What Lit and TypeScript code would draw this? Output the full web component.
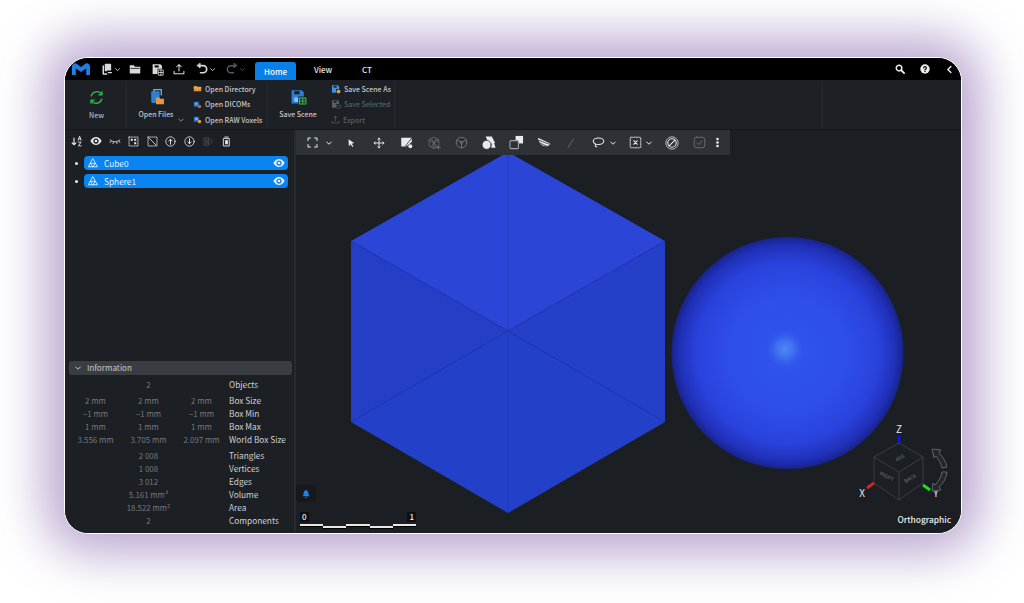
import { LitElement, html, css, svg } from "lit";
import { customElement } from "lit/decorators.js";

const I = (body: unknown, size = 12, vb = "0 0 16 16") =>
  html`<svg width=${size} height=${size} viewBox=${vb} fill="none" stroke="currentColor" stroke-width="1.4" stroke-linecap="round" stroke-linejoin="round">${body}</svg>`;

const eye = svg`<path d="M.5 8c2-3.600 4.600-5.300 7.500-5.300s5.500 1.700 7.500 5.300c-2 3.600-4.600 5.300-7.500 5.300S2.500 11.600.5 8z" fill="currentColor" stroke="none"/><circle cx="8" cy="8" r="3.500" fill="var(--pupil, #1c1f23)" stroke="none"/><circle cx="8" cy="8" r="1.800" fill="currentColor" stroke="none"/>`;
const triMesh = svg`<path d="M8 1.500 15 14H1z"/><path d="M4.500 8.500h7L8 14z"/>`;

const icons: Record<string, unknown> = {
  newFile: svg`<rect x="5" y="1" width="8.500" height="10" rx="1" fill="currentColor" stroke="none"/><path d="M3 4v10.500h6" stroke-width="2"/><rect x="8" y="10" width="7" height="5.500" fill="#000" stroke="none"/><path d="M9.500 12.800h4.500" stroke-width="1.500"/>`,
  folder: svg`<path d="M1 3h5.500L8 5h7v9H1z" fill="currentColor" stroke="none"/><path d="M2.500 7.200h11" stroke="#000" stroke-width="1"/>`,
  saveGrid: svg`<path d="M2 1.500h9.500l2 2V7H8v6.500H2z" fill="currentColor" stroke="none"/><rect x="4.500" y="3" width="5" height="2.500" fill="#000" stroke="none"/><path d="M9.500 8.500h5.500v6.500h-5.500zM12.200 8.500V15M9.500 11.700h5.500" stroke-width="1"/>`,
  upload: svg`<path d="M8 10.500V2.500M5 5l3-3 3 3M1.500 11v3.300h13V11"/>`,
  undo: svg`<path d="M5 3.500h4.500a4.300 4.300 0 0 1 0 9.500H6" stroke-width="2.200"/><path d="M5.500.500v6L1.500 3.500z" fill="currentColor" stroke-width="1"/>`,
  redo: svg`<path d="M11 3.500H6.500a4.300 4.300 0 0 0 0 9.500H10" stroke-width="2"/><path d="M10.500.500v6l4-3z" fill="currentColor" stroke-width="1"/>`,
  chevron: svg`<path d="M3.500 6 8 10.500 12.500 6" stroke-width="2"/>`,
  search: svg`<circle cx="6.500" cy="6.500" r="4.500" stroke-width="2.400"/><path d="m10 10 4.500 4.500" stroke-width="3"/>`,
  help: svg`<circle cx="8" cy="8" r="7.500" fill="currentColor" stroke="none"/><path d="M5.800 6.200A2.200 2.200 0 1 1 8 8.500v1" stroke="#000" stroke-width="1.800"/><circle cx="8" cy="12" r="1.100" fill="#000" stroke="none"/>`,
  back: svg`<path d="M10.500 2.500 5 8l5.500 5.500" stroke-width="2.400"/>`,
  sortAz: svg`<path d="M4 4v9M1.500 10.500 4 13l2.500-2.500" stroke-width="1.500"/><path d="M9.500 7 11.500 1.500 13.500 7M10.200 5.200h2.600M9.800 9.500h3.700L9.800 14.500h3.700" stroke-width="1.200"/>`,
  eye,
  lash: svg`<path d="M1.500 6.500c4 3.500 9 3.500 13 0M3 8l-1.500 2M6 9.300 5.300 11.500M10 9.300l.7 2.200M13 8l1.500 2" stroke-width="1.100"/>`,
  gridDots: svg`<rect x="1.500" y="1.500" width="13" height="13" stroke-dasharray="1.600 1.400" stroke-width="1.100"/><rect x="4" y="4" width="3" height="3" fill="currentColor" stroke="none"/><rect x="9" y="4" width="3" height="3" fill="currentColor" stroke="none"/><rect x="9" y="9" width="3" height="3" fill="currentColor" stroke="none"/>`,
  slashBox: svg`<rect x="1.500" y="1.500" width="13" height="13" stroke-dasharray="1.600 1.400" stroke-width="1.100"/><path d="m3 3 10 10" stroke-width="1.200"/>`,
  circleUp: svg`<circle cx="8" cy="8" r="6.800" stroke-width="1.200"/><path d="M8 12V4.800M5.500 7.300 8 4.800l2.500 2.500" stroke-width="1.400"/>`,
  circleDown: svg`<circle cx="8" cy="8" r="6.800" stroke-width="1.200"/><path d="M8 4v7.200M5.500 8.700 8 11.200l2.500-2.500" stroke-width="1.400"/>`,
  speaker: svg`<path d="M2 2.500h6v11H2z" stroke-width="1" stroke="currentColor"/><path d="M3.500 4h3v8h-3z" fill="currentColor" stroke="none" opacity=".6"/><path d="M10 4.500c2 .8 3 2 3 3.500s-1 2.700-3 3.500" stroke-width="1"/>`,
  trash: svg`<path d="M5.500 1.500h5M4 3.500h8v11H4z" stroke-width="1.300"/><rect x="6" y="6" width="4" height="6" fill="currentColor" stroke="none"/>`,
  full: svg`<path d="M1.500 5V1.500H5M11 1.500h3.500V5M14.500 11v3.500H11M5 14.500H1.500V11" stroke-width="1.500"/>`,
  pointer: svg`<path d="M4 2 13 8l-3.800 1 2.600 4.200-1.800 1-2.500-4.200L4.500 13z" fill="currentColor" stroke="none"/>`,
  move: svg`<path d="M8 1.500v13M1.500 8h13M6.500 3 8 1.500 9.500 3M6.500 13 8 14.500 9.500 13M3 6.500 1.500 8 3 9.500M13 6.500 14.500 8 13 9.500" stroke-width="1.300"/>`,
  paint: svg`<path d="M1.500 2h13v5.500L7.500 13h-6z" fill="currentColor" stroke="none"/><path d="M14.500 2.500 6.500 12.500" stroke="#2e3136" stroke-width="1"/><circle cx="12.700" cy="12.700" r="2.400" fill="currentColor" stroke="none"/>`,
  mesh: svg`<path d="M8 1.500 13.500 4.500v6.500L8 14.500 2.500 11V4.500zM2.500 4.500 8 8l5.500-3.500M8 8v6.500M5 3l5.500 9M11 3 5.500 12" stroke-width=".9"/><path d="M13 11v4M11 13h4" stroke-width="1"/>`,
  steer: svg`<circle cx="8" cy="8" r="6.500" stroke-width="1.200"/><path d="M8 8v6.500M8 8 2.400 4.800M8 8l5.600-3.200" stroke-width="1.200"/><circle cx="8" cy="8" r="1.500" fill="currentColor" stroke="none"/>`,
  shapes: svg`<path d="M5 1.500h6.500l3.500 7H8z" fill="currentColor" stroke="none"/><path d="M11 8.500h3l1.500 5H11z" fill="currentColor" stroke="none"/><circle cx="6" cy="10.500" r="4.800" fill="currentColor" stroke="#2e3136" stroke-width=".8"/>`,
  copy: svg`<rect x="7" y="1" width="8" height="8" fill="currentColor" stroke="none"/><rect x="1" y="6" width="9" height="8.500" rx="1" stroke="#9aa0a6" stroke-width="1.200" fill="#2e3136"/>`,
  feather: svg`<path d="M1 2 14 8c1 .6 1 1.400.2 2.200-2 1.700-5.200 2-8 .6C3.800 9.300 2 6 1 2z" fill="currentColor" stroke="none"/><path d="M2.500 5 13.500 9.200M4 8.400l7 3.200" stroke="#2e3136" stroke-width=".9"/>`,
  pen: svg`<path d="M11.500 2.500 4 14" stroke-width="1.100"/>`,
  lasso: svg`<ellipse cx="8" cy="6.500" rx="6.500" ry="4" stroke-width="1.300"/><path d="M4.500 10c-1 1.500-.3 3.300 1.500 3.300" stroke-width="1.300"/>`,
  selectX: svg`<rect x="1.500" y="1.500" width="13" height="13" rx="1" stroke-dasharray="1.800 1.400" stroke-width="1.100"/><path d="m5.800 5.800 4.400 4.400M10.200 5.800l-4.400 4.400" stroke-width="1.300"/>`,
  ban: svg`<circle cx="8" cy="8" r="7" stroke-width=".9" stroke-dasharray="1.200 .8"/><circle cx="8" cy="8" r="4.800" stroke-width="1.300"/><path d="m4.800 11.300 6.500-6.500" stroke-width="1.300"/>`,
  check: svg`<rect x="1.500" y="1.500" width="13" height="13" rx="3" stroke-width="1.100"/><path d="M5 8.300 7.200 10.500 11 6" stroke-width="1.100"/>`,
  dots: svg`<circle cx="8" cy="3" r="1.900" fill="currentColor" stroke="none"/><circle cx="8" cy="8" r="1.900" fill="currentColor" stroke="none"/><circle cx="8" cy="13" r="1.900" fill="currentColor" stroke="none"/>`,
  bell: svg`<path d="M8 1.200c.7 0 1 .5 1 1 2 .6 2.800 2.300 2.800 4.300 0 2.300.7 3.700 1.700 5H2.500c1-1.300 1.700-2.700 1.700-5 0-2 .8-3.700 2.800-4.300 0-.5.300-1 1-1zM6.500 12.800h3a1.500 1.500 0 0 1-3 0z" fill="currentColor" stroke="none"/>`,
  meshTri: triMesh,
  refresh: svg`<path d="M3 6.500A5.500 5.500 0 0 1 12.500 4.500" stroke="#2ebd4e" stroke-width="1.300"/><path d="M13 9.500A5.500 5.500 0 0 1 3.500 11.500" stroke="#2ebd4e" stroke-width="1.300"/><path d="M13.200 2.500v3h-3M2.800 13.500v-3h3" stroke="#2ebd4e" stroke-width="1.200"/>`,
  openFiles: svg`<rect x="3" y="3" width="8" height="11" rx="1" fill="#2a7fd8" stroke="none"/><path d="M5.500 3V1.500h7v5" stroke="#6fb4ee" stroke-width="1.200"/><path d="M7.500 9h3l1 1.200h3.500v5h-7.500z" fill="#e39a3c" stroke="none"/>`,
  saveScene: svg`<path d="M1.500 2h9.500l2 2v4H8v6.500H1.500z" fill="#2a7fd8" stroke="none"/><rect x="4" y="3" width="5" height="3" fill="#1d2024" stroke="none"/><rect x="4" y="9" width="3.500" height="4" fill="#8ec5f2" stroke="none"/><path d="M9 9.500h6v5.500H9zM12 9.500V15M9 12.200h6" stroke="#3fb34f" stroke-width="1"/>`,
  miniFolder: svg`<path d="M1.500 3.500h5l1.500 1.500h6.500v8h-13z" fill="#e0963a" stroke="none"/><path d="M1.500 7h13" stroke="#f3c27d" stroke-width="1.200"/>`,
  dicom: svg`<rect x="1.500" y="3" width="9" height="9" rx="1" fill="#2f6fc4" stroke="none"/><circle cx="5.500" cy="7" r="2" fill="#8fbdec" stroke="none"/><circle cx="11.500" cy="11.500" r="3.200" fill="#d9503f" stroke="none"/>`,
  raw: svg`<rect x="1.500" y="3" width="9" height="9" rx="1" fill="#2f6fc4" stroke="none"/><rect x="4" y="5" width="4" height="4" fill="#8fbdec" stroke="none"/><circle cx="11.500" cy="11.500" r="3.200" fill="#e0963a" stroke="none"/>`,
  saveAs: svg`<path d="M1.500 2h9.500l2 2v4H8v6H1.500z" fill="#3d8fe0" stroke="none"/><rect x="4" y="3" width="5" height="2.800" fill="#1d2024" stroke="none"/><circle cx="12" cy="12" r="3.200" fill="#e0963a" stroke="none"/>`,
  saveOff: svg`<path d="M1.500 2h9.500l2 2v4H8v6H1.500z" fill="#5a5e63" stroke="none"/><rect x="4" y="3" width="5" height="2.800" fill="#1d2024" stroke="none"/><path d="M9 10h6v4.500H9z" stroke="#5a5e63" stroke-width="1"/>`,
  exportOff: svg`<path d="M8 10V2.500M5 5l3-3 3 3M2 11v3h12v-3" stroke="#5a5e63"/>`,
};

const ic = (name: string, size = 12) => I(icons[name], size);

const infoRows: { v: string[]; label: string; cls?: string }[] = [
  { v: ["", "2", ""], label: "Objects" },
  { v: ["2 mm", "2 mm", "2 mm"], label: "Box Size", cls: "first" },
  { v: ["−1 mm", "−1 mm", "−1 mm"], label: "Box Min" },
  { v: ["1 mm", "1 mm", "1 mm"], label: "Box Max" },
  { v: ["3.556 mm", "3.705 mm", "2.097 mm"], label: "World Box Size" },
  { v: ["", "2 008", ""], label: "Triangles", cls: "first" },
  { v: ["", "1 008", ""], label: "Vertices" },
  { v: ["", "3 012", ""], label: "Edges" },
  { v: ["", "5.161 mm³", ""], label: "Volume" },
  { v: ["", "18.522 mm²", ""], label: "Area" },
  { v: ["", "2", ""], label: "Components" },
];

@customElement("app-root")
export class AppRoot extends LitElement {
  static styles = css`
    :host {
      display: block;
      width: 1024px;
      height: 603px;
      overflow: hidden;
      background: #fff;
      font-family: "Noto Sans CJK SC", "Noto Sans", sans-serif;
      box-sizing: border-box;
      padding: 57px 62px 69px 64px;
    }
    svg { display: block; flex: none; }
    .window {
      height: 100%;
      border: 1.500px solid #fff;
      border-radius: 24px;
      overflow: hidden;
      background: #1c1f23;
      display: flex;
      flex-direction: column;
      box-shadow: 0 0 52px 18px #b6a2cd;
      box-sizing: border-box;
    }
    .titlebar {
      height: 22px;
      flex: none;
      background: #000;
      display: flex;
      align-items: center;
      color: #d8dadc;
    }
    .logo { margin-left: 7px; margin-right: 7px; }
    .tb { width: 22px; display: flex; justify-content: center; align-items: center; }
    .tb.dim { color: #55585c; }
    .tb.pair { width: 27px; gap: 1px; }
    .tb.pair.undo { margin-left: 1px; width: 30px; }
    .tb.pair.redo { width: 29px; }
    .tab {
      height: 22px;
      font-size: 8px;
      font-weight: 500;
      color: #e6e8ea;
      display: flex;
      align-items: center;
      justify-content: center;
      width: 44px;
    }
    .tab.active {
      margin-left: 5px;
      width: 41px;
      height: 18px;
      align-self: flex-end;
      background: #0a7fe8;
      border-radius: 3px 3px 0 0;
      color: #fff;
    }
    .tab.view { margin-left: 5px; }
    .spacer { flex: 1; }
    .right-ic { display: flex; align-items: center; gap: 15px; margin-right: 7px; color: #eee; }
    .ribbon {
      height: 50px;
      flex: none;
      display: flex;
      background: #1d2024;
      border-bottom: 1px solid #15171a;
      box-sizing: border-box;
      font-size: 7px;
      font-weight: 500;
      color: #c4c7ca;
    }
    .rg {
      border-right: 1px solid #26292d;
      display: flex;
      height: 47px;
      margin-top: 1px;
      box-sizing: border-box;
    }
    .rg.new { width: 62px; flex-direction: column; align-items: center; padding: 8px 0 0 2px; }
    .new-label { font-size: 7px; color: #b8bbbe; margin-top: 4px; line-height: 10px; }
    .rg.open { width: 141px; padding-left: 4px; }
    .rg.save { width: 127px; padding-left: 5px; }
    .big { display: flex; flex-direction: column; align-items: center; width: 50px; line-height: 11px; padding-top: 7px; gap: 4px; flex: none; }
    .big span { white-space: nowrap; }
    .chev-sm { align-self: flex-end; margin: 0 0 4px -4px; color: #85888c; flex: none; }
    .list { display: flex; flex-direction: column; flex: none; }
    .rg.open .list { margin-left: 8px; }
    .rg.save .list { margin-left: 8px; }
    .li { display: flex; align-items: center; gap: 3px; height: 15.500px; flex: none; white-space: nowrap; font-size: 7px; }
    .li.off { color: #5b5f63; }
    .rg.tail { width: 428px; }
    .body { flex: 1; display: flex; min-height: 0; }
    .panel {
      width: 229px;
      flex: none;
      border-right: 2px solid #26292d;
      box-sizing: content-box;
      display: flex;
      flex-direction: column;
      background: #1c1f23;
      color: #d2d4d7;
    }
    .ptools { display: flex; align-items: center; height: 22px; padding: 0 0 0 3px; color: #e6e8ea; }
    .ptools div { width: 18.700px; display: flex; justify-content: center; }
    .ptools .dim { color: #55595e; }
    .tree { display: flex; flex-direction: column; gap: 4px; padding-top: 4px; }
    .row { display: flex; align-items: center; padding-left: 10px; }
    .bullet { width: 3px; height: 3px; border-radius: 50%; background: #e8eaec; margin-right: 6px; }
    .item {
      width: 204px;
      height: 14px;
      background: #0a84f0;
      border-radius: 4px;
      display: flex;
      align-items: center;
      color: #e8f3ff;
      font-size: 8.300px;
      padding: 0 3px 0 4px;
      box-sizing: border-box;
      gap: 6px;
      --pupil: #0a84f0;
    }
    .item span { flex: 1; }
    .info { margin-top: auto; padding: 0 2px 6.500px 4px; }
    .info-h {
      height: 14px;
      background: #3a3d42;
      border-radius: 3px;
      display: flex;
      align-items: center;
      gap: 5px;
      font-size: 8.100px;
      color: #c6c8cb;
      padding-left: 5px;
      margin-bottom: 3px;
      width: 223px;
      box-sizing: border-box;
    }
    .irow { display: grid; grid-template-columns: 53px 53px 53px auto; height: 13px; align-items: center; font-size: 7.900px; line-height: 13px; }
    .irow.first { margin-top: 3px; }
    .irow div { text-align: center; color: #75797d; white-space: nowrap; }
    .irow .lab { text-align: left; color: #cfd1d4; margin-left: 1px; font-size: 8.300px; }
    .vp { flex: 1; position: relative; background: #1b1e22; overflow: hidden; }
    .scene { position: absolute; inset: 0; width: 100%; height: 100%; }
    .vtools {
      position: absolute;
      left: 0;
      top: 0;
      height: 25px;
      width: 434px;
      background: #2e3136;
      display: flex;
      align-items: center;
      padding-left: 3px;
      box-sizing: border-box;
      color: #e8eaec;
    }
    .vt { width: 27.500px; display: flex; justify-content: center; flex: none; }
    .vt.dim { color: #70747a; }
    .vt.narrow { width: 9px; }
    .vchev { width: 12px; margin-left: -6px; margin-right: 3px; display: flex; justify-content: center; flex: none; }
    .vchev.wide { margin-left: -4px; }
    .bell {
      position: absolute;
      left: 0;
      bottom: 31px;
      width: 20px;
      height: 17px;
      background: #16181b;
      border-radius: 3px;
      display: flex;
      align-items: center;
      justify-content: center;
      color: #1684f0;
    }
    .scale { position: absolute; left: 4px; bottom: 3px; width: 116px; }
    .scale-l { display: flex; justify-content: space-between; font-size: 8px; font-weight: 500; color: #eee; line-height: 10px; margin-bottom: 2px; }
    .scale-l span { background: #0e0f11; padding: 0 2px; }
    .bars { display: flex; align-items: flex-start; height: 6px; }
    .bars i { flex: 1; height: 2px; background: #e8e8e4; box-shadow: 0 1px 0 #000; display: block; }
    .bars i:nth-child(even) { margin-top: 2px; }
    .ortho { position: absolute; right: 10px; bottom: 8px; font-size: 8.400px; font-weight: 500; color: #eceeef; line-height: 12px; }
  `;

  render() {
    return html`<div class="window">
      <div class="titlebar">
        <svg class="logo" width="18" height="12" viewBox="0 0 18 12"><path d="M0 12V3.500C0 1 2.800-.6 5 1L9 4l4-3c2.200-1.600 5 0 5 2.500V12h-3.800V5.500L9 9 3.800 5.500V12z" fill="#1f7fe0"/></svg>
        <div class="tb pair">${ic("newFile", 12)}${ic("chevron", 7)}</div>
        <div class="tb">${ic("folder", 12)}</div>
        <div class="tb">${ic("saveGrid", 13)}</div>
        <div class="tb">${ic("upload", 12)}</div>
        <div class="tb pair undo">${ic("undo", 12)}${ic("chevron", 7)}</div>
        <div class="tb pair redo dim">${ic("redo", 12)}${ic("chevron", 7)}</div>
        <div class="tab active">Home</div>
        <div class="tab view">View</div>
        <div class="tab">CT</div>
        <div class="spacer"></div>
        <div class="right-ic">${ic("search", 10)}${ic("help", 10)}${ic("back", 9)}</div>
      </div>
      <div class="ribbon">
        <div class="rg new">${ic("refresh", 17)}<span class="new-label">New</span></div>
        <div class="rg open">
          <div class="big">${ic("openFiles", 17)}<span>Open Files</span></div>
          <div class="chev-sm">${ic("chevron", 8)}</div>
          <div class="list">
            <div class="li">${ic("miniFolder", 9)}Open Directory</div>
            <div class="li">${ic("dicom", 9)}Open DICOMs</div>
            <div class="li">${ic("raw", 9)}Open RAW Voxels</div>
          </div>
        </div>
        <div class="rg save">
          <div class="big">${ic("saveScene", 17)}<span>Save Scene</span></div>
          <div class="list">
            <div class="li">${ic("saveAs", 10)}Save Scene As</div>
            <div class="li off">${ic("saveOff", 10)}Save Selected</div>
            <div class="li off">${ic("exportOff", 9)}Export</div>
          </div>
        </div>
        <div class="rg tail"></div>
      </div>
      <div class="body">
        <div class="panel">
          <div class="ptools">
            <div>${ic("sortAz", 12)}</div><div>${ic("eye", 12)}</div><div>${ic("lash", 12)}</div>
            <div>${ic("gridDots", 11)}</div><div>${ic("slashBox", 11)}</div><div>${ic("circleUp", 11)}</div>
            <div>${ic("circleDown", 11)}</div><div class="dim">${ic("speaker", 11)}</div><div>${ic("trash", 11)}</div>
          </div>
          <div class="tree">
            ${["Cube0", "Sphere1"].map(
              (n) => html`<div class="row"><span class="bullet"></span>
                <div class="item">${ic("meshTri", 10)}<span>${n}</span>${ic("eye", 12)}</div></div>`
            )}
          </div>
          <div class="info">
            <div class="info-h">${ic("chevron", 8)}Information</div>
            ${infoRows.map(
              (r) => html`<div class="irow ${r.cls ?? ""}">
                <div>${r.v[0]}</div><div>${r.v[1]}</div><div>${r.v[2]}</div><div class="lab">${r.label}</div>
              </div>`
            )}
          </div>
        </div>
        <div class="vp">
          <svg class="scene" viewBox="296 130 665 403" preserveAspectRatio="xMinYMin slice">
            <defs>
              <radialGradient id="sph" cx="787.500" cy="353" r="116" gradientUnits="userSpaceOnUse">
                <stop offset="0" stop-color="#3055ec"/>
                <stop offset=".5" stop-color="#2e4eea"/>
                <stop offset=".78" stop-color="#2a42dc"/>
                <stop offset=".93" stop-color="#2030b8"/>
                <stop offset="1" stop-color="#18238c"/>
              </radialGradient>
              <radialGradient id="hl" cx="785" cy="349" r="20" gradientUnits="userSpaceOnUse">
                <stop offset="0" stop-color="#5088f4"/>
                <stop offset=".45" stop-color="#4578f2" stop-opacity=".75"/>
                <stop offset="1" stop-color="#3055ec" stop-opacity="0"/>
              </radialGradient>
            </defs>
            <path d="M508 152 351 241 508 331z" fill="#2b45d6"/>
            <path d="M508 152 665 241 508 331z" fill="#2b45d6"/>
            <path d="M351 241 351 422 508 331z" fill="#243fc6"/>
            <path d="M351 422 508 513 508 331z" fill="#2340c8"/>
            <path d="M665 241 665 422 508 331z" fill="#243fc8"/>
            <path d="M665 422 508 513 508 331z" fill="#2340c8"/>
            <path d="M508 152V513M351 241 508 331 665 241M351 422 508 331 665 422" stroke="#1f33b4" stroke-width=".7" fill="none"/>
            <circle cx="787.500" cy="353" r="116" fill="url(#sph)"/>
            <circle cx="785" cy="349" r="20" fill="url(#hl)"/>
            <path d="M899 443 923 457V483L899 500 874 483V457zM874 457 899 472 923 457M899 472V500" fill="#1c1f23" stroke="#3a3d42"/>
            <g font-family="Noto Sans CJK SC, Noto Sans, sans-serif" font-size="5" font-weight="500" fill="#62666b" text-anchor="middle">
              <text transform="translate(886 478) rotate(25)">RIGHT</text>
              <text transform="translate(911 480) rotate(-30)">BACK</text>
              <text transform="translate(899 456) rotate(150)">TOP</text>
            </g>
            <path d="M899 443V436" stroke="#1414d8" stroke-width="3"/>
            <path d="M874 483 867 488" stroke="#d8222a" stroke-width="3"/>
            <path d="M923 485 930 490" stroke="#22d822" stroke-width="3"/>
            <g font-family="Noto Sans CJK SC, Noto Sans, sans-serif" font-size="10" fill="#e8eaec" text-anchor="middle">
              <text x="899" y="433">Z</text>
              <text x="862" y="497">X</text>
              <text x="936" y="497">Y</text>
            </g>
            <g fill="#24272b" stroke="#5f6367" stroke-width="1">
              <path d="M932 449 941 450 939 453C943 457 946 462 947 467L942 468C941 463 938 459 936 456L934 458z"/>
              <path d="M947 472C946 479 943 484 939 487L941 490 932 491 933 483 935 485C939 481 941 477 942 472z"/>
            </g>
          </svg>
          <div class="vtools">
            <div class="vt">${ic("full", 11)}</div><div class="vchev wide">${ic("chevron", 8)}</div>
            <div class="vt">${ic("pointer", 10)}</div>
            <div class="vt">${ic("move", 12)}</div>
            <div class="vt">${ic("paint", 13)}</div>
            <div class="vt dim">${ic("mesh", 14)}</div>
            <div class="vt dim">${ic("steer", 13)}</div>
            <div class="vt">${ic("shapes", 15)}</div>
            <div class="vt">${ic("copy", 15)}</div>
            <div class="vt">${ic("feather", 14)}</div>
            <div class="vt dim">${ic("pen", 12)}</div>
            <div class="vt">${ic("lasso", 13)}</div><div class="vchev">${ic("chevron", 8)}</div>
            <div class="vt">${ic("selectX", 13)}</div><div class="vchev">${ic("chevron", 8)}</div>
            <div class="vt">${ic("ban", 14)}</div>
            <div class="vt dim">${ic("check", 13)}</div>
            <div class="vt narrow">${ic("dots", 11)}</div>
          </div>
          <div class="bell">${ic("bell", 10)}</div>
          <div class="scale">
            <div class="scale-l"><span>0</span><span>1</span></div>
            <div class="bars"><i></i><i></i><i></i><i></i><i></i></div>
          </div>
          <div class="ortho">Orthographic</div>
        </div>
      </div>
    </div>`;
  }
}
